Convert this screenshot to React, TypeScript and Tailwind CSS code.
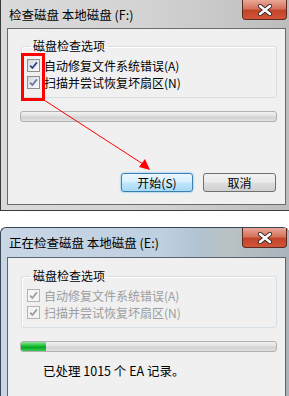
import React from "react";

function Check({ disabled = false, faded = false }: { disabled?: boolean; faded?: boolean }) {
  const stroke = disabled ? "#9b9b9b" : faded ? "#6673a6" : "#2a3f8f";
  return (
    <span
      className={`flex h-[13px] w-[13px] shrink-0 items-center justify-center border ${
        disabled ? "border-[#b4b4b4] bg-[#f4f4f4]" : "border-[#8e8f8f] bg-[linear-gradient(135deg,#d6d9de,#fbfbfb)]"
      }`}
    >
      <svg width="9" height="9" viewBox="0 0 9 9">
        <path d="M1.2 4.6 L3.4 7 L7.9 1.4" stroke={stroke} strokeWidth="1.7" fill="none" />
      </svg>
    </span>
  );
}

function CloseBtn() {
  return (
    <div className="absolute right-[2px] top-0 flex h-[20px] w-[45px] items-center justify-center rounded-b-[4px] border border-t-0 border-[#5b2a20] bg-[linear-gradient(180deg,#e9a898_0%,#d5735c_45%,#c2452a_55%,#d2553a_100%)]">
      <svg width="16" height="12" viewBox="0 0 16 12">
        <path d="M3 2 L13 10 M13 2 L3 10" stroke="#3d2a2a" strokeWidth="4.2" strokeLinecap="round" />
        <path d="M3 2 L13 10 M13 2 L3 10" stroke="#ffffff" strokeWidth="2.4" strokeLinecap="round" />
      </svg>
    </div>
  );
}

function Group({ disabled = false, faded2 = false }: { disabled?: boolean; faded2?: boolean }) {
  const txt = disabled ? "text-[#9d9d9d]" : "text-black";
  return (
    <fieldset className="ml-[1px] h-[60px] rounded-[3px] border border-[#d5dfe5] px-[5px] pb-0 pt-0 shadow-[inset_1px_1px_0_#ffffff]">
      <legend className="ml-[3px] px-[3px] text-[12px] leading-[16px] text-black">磁盘检查选项</legend>
      <div className="mt-[5px] flex flex-col gap-[4px]">
        <div className="flex items-center gap-[4px]">
          <Check disabled={disabled} />
          <span className={`text-[12px] leading-[13px] ${txt}`}>自动修复文件系统错误(A)</span>
        </div>
        <div className="flex items-center gap-[4px]">
          <Check disabled={disabled} faded={faded2} />
          <span className={`text-[12px] leading-[13px] ${txt}`}>扫描并尝试恢复坏扇区(N)</span>
        </div>
      </div>
    </fieldset>
  );
}

function Progress({ fill = 0 }: { fill?: number }) {
  return (
    <div className="relative mt-[13px] h-[11px] overflow-hidden rounded-[3px] border border-[#b0b0b0] bg-[linear-gradient(180deg,#f3f3f3_0%,#e2e2e2_40%,#d3d3d3_60%,#e0e0e0_100%)]">
      {fill > 0 && (
        <div
          className="h-full bg-[linear-gradient(180deg,#8ce59a_0%,#22c13c_40%,#06a822_60%,#3ccb56_100%)]"
          style={{ width: fill }}
        />
      )}
    </div>
  );
}

export default function App() {
  return (
    <div className="relative h-[396px] w-[289px] overflow-hidden bg-white font-['Noto_Sans_CJK_SC','Noto_Sans',sans-serif]">
      {/* Dialog 1 */}
      <div className="relative flex h-[211px] flex-col border-b border-l border-[#3a3a3a] bg-[linear-gradient(90deg,#dadada_0%,#d3d3d3_50%,#bdbdbd_100%)] pb-[5px] pl-[6px] pr-[3px]">
        <div className="flex h-[28px] items-center pl-[2px] pt-[2px] text-[12.5px] text-black">检查磁盘 本地磁盘 (F:)</div>
        <CloseBtn />
        <div className="flex flex-1 flex-col border border-[#6a6a6a] bg-[#f0f0f0] pl-[12px] pr-[8px] pt-[9px]">
          <Group faded2 />
          <Progress />
          <div className="mr-[1px] mt-[51px] flex justify-end gap-[10px]">
            <div className="flex h-[19px] w-[72px] items-center justify-center rounded-[3px] border border-[#3c7fb1] bg-[linear-gradient(180deg,#eaf6fd_0%,#d9f0fc_45%,#bee6fd_55%,#a7d9f5_100%)] text-[12px] shadow-[0_0_2px_#4fb0e8]">
              开始(S)
            </div>
            <div className="flex h-[19px] w-[73px] items-center justify-center rounded-[3px] border border-[#707070] bg-[linear-gradient(180deg,#f2f2f2_0%,#ebebeb_45%,#dddddd_55%,#cfcfcf_100%)] text-[12px]">
              取消
            </div>
          </div>
        </div>
      </div>

      <div className="h-[16px]" />

      {/* Dialog 2 */}
      <div className="relative flex h-[169px] flex-col rounded-t-[6px] border-l border-t border-[#3a4656] bg-[linear-gradient(90deg,#c8d6e5_0%,#bfd0e1_55%,#b2c3d2_68%,#b9c2c4_78%,#aab3ba_100%)] pl-[6px] pr-[3px]">
        <div className="flex h-[29px] items-center pl-[2px] pt-[1px] text-[12.5px] text-black">正在检查磁盘 本地磁盘 (E:)</div>
        <CloseBtn />
        <div className="flex flex-1 flex-col border border-b-0 border-[#5a6470] bg-[#f0f0f0] pl-[12px] pr-[8px] pt-[10px]">
          <Group disabled />
          <Progress fill={25} />
          <div className="ml-[23px] mt-[11px] text-[12.5px] leading-[16px] text-black">已处理 1015 个 EA 记录。</div>
        </div>
      </div>

      {/* Red annotation */}
      <div className="absolute left-[21px] top-[53px] h-[48px] w-[24px] border-[3px] border-[#ff0000]" />
      <svg className="absolute left-0 top-0" width="289" height="211" viewBox="0 0 289 211">
        <line x1="44" y1="100" x2="146" y2="166" stroke="#ff0000" strokeWidth="1" />
        <polygon points="150,170 139,167 145,159" fill="#ff0000" />
      </svg>
    </div>
  );
}
